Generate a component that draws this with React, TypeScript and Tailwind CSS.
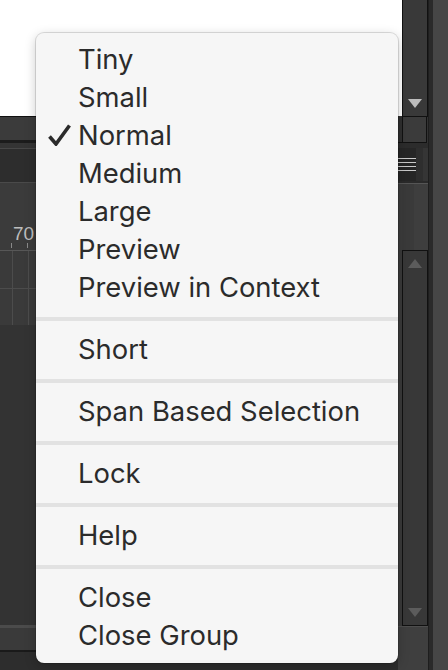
import React from "react";

type Entry = { label?: string; checked?: boolean; sep?: boolean };

const entries: Entry[] = [
  { label: "Tiny" },
  { label: "Small" },
  { label: "Normal", checked: true },
  { label: "Medium" },
  { label: "Large" },
  { label: "Preview" },
  { label: "Preview in Context" },
  { sep: true },
  { label: "Short" },
  { sep: true },
  { label: "Span Based Selection" },
  { sep: true },
  { label: "Lock" },
  { sep: true },
  { label: "Help" },
  { sep: true },
  { label: "Close" },
  { label: "Close Group" },
];

function Tri({ up, color }: { up?: boolean; color: string }) {
  return (
    <svg width="14" height="9" viewBox="0 0 14 9">
      <polygon points={up ? "7,0 14,9 0,9" : "0,0 14,0 7,9"} fill={color} />
    </svg>
  );
}

export default function App() {
  return (
    <div className="relative w-[448px] h-[670px] overflow-hidden bg-[#333333] flex" style={{ fontFamily: "Inter, 'Liberation Sans', sans-serif" }}>
      {/* left column */}
      <div className="w-[398px] flex flex-col">
        <div className="h-[116px] bg-white" />
        <div className="h-[1px] bg-[#111]" />
        <div className="h-[23px] bg-[#3b3b3b]" />
        <div className="h-[3px] bg-[#1c1c1c]" />
        <div className="h-[5px] bg-[#343434]" />
        <div className="h-[1px] bg-[#474747]" />
        <div className="h-[33px] bg-[#2d2d2d]" />
        <div className="h-[1px] bg-[#4a4a4a]" />
        <div className="h-[67px] bg-[#3b3b3b] relative">
          <span className="absolute left-[13px] top-[41px] text-[19px] leading-[19px] text-[#bdbdbd]" style={{ fontFamily: "'Liberation Sans', sans-serif" }}>70</span>
          <div className="absolute left-[11px] top-[60px] w-[1px] h-[5px] bg-[#8a8a8a]" />
          <div className="absolute left-[27px] top-[60px] w-[1px] h-[5px] bg-[#8a8a8a]" />
        </div>
        <div className="h-[1px] bg-[#575757]" />
        <div className="h-[74px] grid grid-cols-[12px_1px_15px_1px_15px_1px_1fr] grid-rows-[37px_1px_36px] bg-[#4c4c4c] gap-0">
          {Array.from({ length: 3 }).map((_, r) =>
            [0, 1, 2, 3, 4, 5, 6].map((c) => (
              <div key={`${r}-${c}`} className={r === 1 || c % 2 === 1 ? "bg-[#4c4c4c]" : "bg-[#3a3a3a]"} />
            ))
          )}
        </div>
        <div className="h-[300px] bg-[#333333]" />
        <div className="h-[3px] bg-[#4b4b4b]" />
        <div className="h-[22px] bg-[#3a3a3a]" />
        <div className="h-[2px] bg-[#1a1a1a]" />
        <div className="flex-1 bg-[#2d2d2d]" />
      </div>

      {/* right strip */}
      <div className="w-[30px] flex flex-col">
        <div className="h-[117px] flex">
          <div className="w-[4px] h-[116px] bg-white" />
          <div className="w-[26px] border-l border-r border-b border-[#111] bg-[#393939] flex flex-col justify-end items-center pb-[8px]">
            <Tri color="#bdbdbd" />
          </div>
        </div>
        <div className="h-[26px] flex">
          <div className="w-[5px] border-r border-b border-[#111] bg-[#2f2f2f]" />
          <div className="flex-1 border-r border-b border-[#111] bg-[#3b3b3b] mr-[1px]" />
        </div>
        <div className="h-[5px] bg-[#2c2c2c]" />
        <div className="h-[33px] flex bg-[#353535]">
          <div className="w-[25px] bg-[#262626] flex">
            <div className="w-[18px] flex flex-col justify-center gap-[2.5px]">
              <div className="h-[1.5px] bg-[#c9c9c9]" />
              <div className="h-[1.5px] bg-[#c9c9c9]" />
              <div className="h-[1.5px] bg-[#c9c9c9]" />
              <div className="h-[1.5px] bg-[#c9c9c9]" />
            </div>
            <div className="flex-1 bg-[#2e2e2e]" />
          </div>
        </div>
        <div className="h-[2px] bg-[#2a2a2a]" />
        <div className="h-[1px] bg-[#555555]" />
        <div className="h-[66px] bg-[#3c3c3c] flex">
          <div className="w-[4px]" />
          <div className="w-[12px] bg-[#3a3a3a]" />
          <div className="flex-1 bg-[#3e3e3e]" />
        </div>
        <div className="h-[376px] flex">
          <div className="w-[4px] bg-[#3a3a3a]" />
          <div className="flex-1 border border-[#111] bg-[#383838] flex flex-col justify-between items-center py-[8px]">
            <Tri up color="#5c5c5c" />
            <Tri color="#5c5c5c" />
          </div>
        </div>
        <div className="h-[1px] bg-[#4d4d4d]" />
        <div className="flex-1 bg-[#3f3f3f]" />
      </div>

      <div className="w-[5px] bg-[#2a2a2a] border-l border-[#1e1e1e]" />
      <div className="flex-1 bg-[#464646]" />

      {/* menu */}
      <div className="absolute left-[36px] top-[33px] w-[362px] h-[630px] rounded-[8px] bg-[#f6f6f6] pt-[8px] pb-[8px] shadow-[0_0_0_1px_rgba(0,0,0,0.12),0_3px_12px_rgba(0,0,0,0.22)]">
        {entries.map((e, i) =>
          e.sep ? (
            <div key={i} className="h-[24px] flex flex-col justify-center">
              <div className="h-[4px] bg-[#e2e2e2]" />
            </div>
          ) : (
            <div key={i} className="relative h-[38px] pl-[42px] flex items-center text-[27.4px] text-[#2b2b2b] leading-none">
              {e.checked && (
                <svg className="absolute left-[12px] top-[7px]" width="23" height="22" viewBox="0 0 23 22">
                  <path d="M1.5 12.5 L8 20 L21.5 1.5" fill="none" stroke="#2b2b2b" strokeWidth="3.6" strokeLinejoin="miter" />
                </svg>
              )}
              <span>{e.label}</span>
            </div>
          )
        )}
      </div>
    </div>
  );
}
